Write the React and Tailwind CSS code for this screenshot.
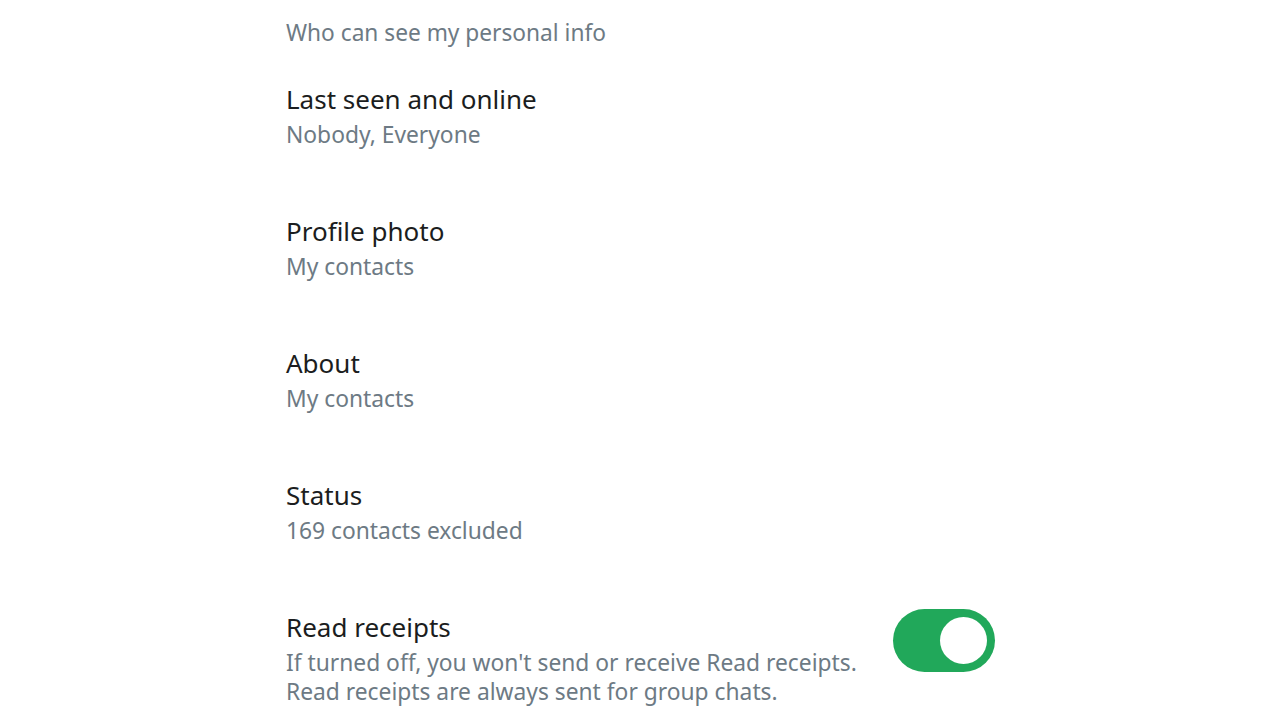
const rows = [
  { title: "Last seen and online", sub: ["Nobody, Everyone"] },
  { title: "Profile photo", sub: ["My contacts"] },
  { title: "About", sub: ["My contacts"] },
  { title: "Status", sub: ["169 contacts excluded"] },
];

function Toggle() {
  return (
    <div className="flex h-[63px] w-[102px] shrink-0 items-center justify-end rounded-full bg-[#21a85a] pr-[8px]">
      <div className="h-[47px] w-[47px] rounded-full bg-white" />
    </div>
  );
}

export default function App() {
  return (
    <div
      className="h-[720px] w-full overflow-hidden bg-white pl-[286px] pr-[285px]"
      style={{ fontFamily: '"Noto Sans", "Open Sans", sans-serif' }}
    >
      <div className="pt-[18px] text-[22.7px] leading-[29px] text-[#6d7a84]">
        Who can see my personal info
      </div>
      {rows.map((r) => (
        <div key={r.title} className="pt-[32px] pb-[30px]">
          <div className="text-[26px] leading-[41px] text-[#1b1d20]">{r.title}</div>
          {r.sub.map((s) => (
            <div key={s} className="text-[22.8px] leading-[29px] text-[#6d7a84]">
              {s}
            </div>
          ))}
        </div>
      ))}
      <div className="flex items-start justify-between pt-[32px]">
        <div>
          <div className="text-[26px] leading-[41px] text-[#1b1d20]">Read receipts</div>
          <div className="text-[22.8px] leading-[29px] text-[#6d7a84]">
            If turned off, you won't send or receive Read receipts.
            <br />
            Read receipts are always sent for group chats.
          </div>
        </div>
        <div className="mt-[2px]">
          <Toggle />
        </div>
      </div>
    </div>
  );
}
